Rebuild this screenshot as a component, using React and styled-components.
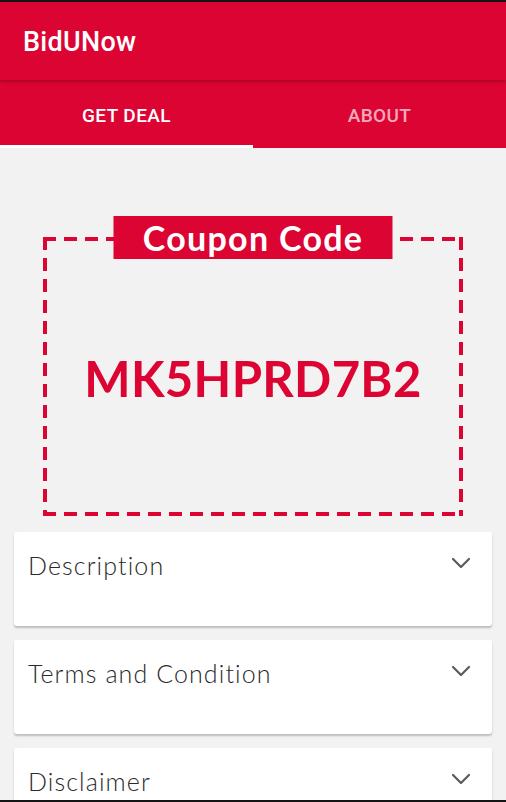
import React from 'react';
import styled, { createGlobalStyle } from 'styled-components';
import { ChevronDown } from 'lucide-react';

const RED = '#dc0433';

const GlobalStyle = createGlobalStyle`
  html, body {
    margin: 0;
    padding: 0;
    background: #f2f2f2;
  }
  * {
    box-sizing: border-box;
  }
`;

const sections = ['Description', 'Terms and Condition', 'Disclaimer'];

const App = () => {
  return (
    <Screen>
      <GlobalStyle />
      <Header>
        <Toolbar>
          <Title>BidUNow</Title>
        </Toolbar>
        <Tabs>
          <Tab active>GET DEAL</Tab>
          <Tab>ABOUT</Tab>
        </Tabs>
      </Header>

      <Content>
        <CouponBox>
          <CouponLabel>Coupon Code</CouponLabel>
          <Code>MK5HPRD7B2</Code>
        </CouponBox>

        <CardList>
          {sections.map((name) => (
            <Card key={name}>
              <CardTitle>{name}</CardTitle>
              <Chevron>
                <ChevronDown size={32} strokeWidth={1.6} color="#5a5a5a" />
              </Chevron>
            </Card>
          ))}
        </CardList>
      </Content>
    </Screen>
  );
};

const Screen = styled.div`
  height: 100vh;
  display: flex;
  flex-direction: column;
  border-top: 2px solid #141414;
  border-bottom: 2px solid #141414;
  overflow: hidden;
  background: #f2f2f2;
`;

const Header = styled.header`
  background: ${RED};
  flex-shrink: 0;
`;

const Toolbar = styled.div`
  height: 78px;
  display: flex;
  align-items: center;
  padding: 2px 0 0 23px;
  position: relative;
  z-index: 1;
  box-shadow: 0 2px 3px rgba(90, 0, 20, 0.35);
`;

const Title = styled.h1`
  margin: 0;
  font-family: Roboto, 'Liberation Sans', sans-serif;
  font-weight: 500;
  font-size: 27px;
  letter-spacing: 0.3px;
  color: #fff;
`;

const Tabs = styled.nav`
  display: flex;
  height: 68px;
`;

const Tab = styled.div`
  flex: 1;
  display: flex;
  align-items: center;
  justify-content: center;
  padding-top: 5px;
  font-family: Roboto, 'Liberation Sans', sans-serif;
  font-weight: 500;
  font-size: 19px;
  letter-spacing: 0.4px;
  color: ${(p) => (p.active ? '#fff' : 'rgba(255, 255, 255, 0.68)')};
  border-bottom: 3px solid ${(p) => (p.active ? '#fff' : 'transparent')};
`;

const Content = styled.main`
  flex: 1;
  overflow: hidden;
  padding-top: 89px;
`;

const dashH = `repeating-linear-gradient(90deg, ${RED} 0 13px, transparent 13px 21px)`;
const dashV = `repeating-linear-gradient(180deg, ${RED} 0 13px, transparent 13px 21px)`;

const CouponBox = styled.section`
  position: relative;
  width: 420px;
  height: 279px;
  margin: 0 auto;
  display: flex;
  align-items: center;
  justify-content: center;
  background:
    ${dashH} left top / 100% 4px no-repeat,
    ${dashH} left bottom / 100% 4px no-repeat,
    ${dashV} left top / 4px 100% no-repeat,
    ${dashV} right top / 4px 100% no-repeat;
`;

const CouponLabel = styled.div`
  position: absolute;
  top: -21px;
  left: 50%;
  transform: translateX(-50%);
  width: 279px;
  height: 43px;
  background: ${RED};
  color: #fff;
  display: flex;
  align-items: center;
  justify-content: center;
  font-family: Lato, 'Noto Sans', sans-serif;
  font-weight: 700;
  font-size: 34px;
  letter-spacing: 1.3px;
  line-height: 1;
`;

const Code = styled.div`
  font-family: Lato, 'Noto Sans', sans-serif;
  font-weight: 700;
  font-size: 49px;
  letter-spacing: 0.3px;
  color: ${RED};
  padding-top: 2px;
`;

const CardList = styled.div`
  display: flex;
  flex-direction: column;
  gap: 14px;
  padding: 16px 14px 0;
`;

const Card = styled.div`
  height: 94px;
  background: #fff;
  border-radius: 3px;
  box-shadow: 0 2px 2px rgba(0, 0, 0, 0.22);
  display: flex;
  align-items: flex-start;
  justify-content: space-between;
  padding: 17px 15px 0 14px;
`;

const CardTitle = styled.h3`
  margin: 0;
  font-family: Lato, 'Noto Sans', sans-serif;
  font-weight: 300;
  font-size: 25px;
  letter-spacing: 1.1px;
  line-height: 32px;
  color: #2a2a2a;
`;

const Chevron = styled.span`
  display: flex;
  margin-top: -2px;
`;

export default App;
